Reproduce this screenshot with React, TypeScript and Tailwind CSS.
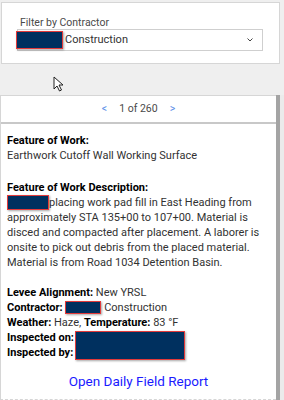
import React from 'react'

const font = { fontFamily: 'Roboto, "Open Sans", sans-serif' }

function Redact({ className = '' }: { className?: string }) {
  return (
    <span
      className={`inline-block align-middle bg-[#00305f] border border-[#e23a3a] shadow-[1px_1px_2px_rgba(0,0,0,0.35)] ${className}`}
    />
  )
}

function Cursor() {
  return (
    <svg className="absolute left-[53px] top-[76px]" width="12" height="16" viewBox="0 0 12 16">
      <path d="M1 1 L1 13 L4 10 L6.5 15 L8.5 14 L6 9 L10 9 Z" fill="#fff" stroke="#222" strokeWidth="1" strokeLinejoin="round" />
    </svg>
  )
}

export default function App() {
  return (
    <div className="relative w-[284px] h-[400px] bg-[#efefef] overflow-hidden text-[#323232]" style={font}>
      {/* filter panel */}
      <div className="ml-[1px] mt-[2px] w-[279px] h-[62px] bg-white border border-[#d6d6d6] pl-[15px] pt-[13px]">
        <div className="text-[10.5px] leading-[13px] text-[#4a4a4a] pl-[3px]">Filter by Contractor</div>
        <div className="w-[246px] h-[22px] border border-[#cfcfcf] flex items-center">
          <Redact className="w-[47px] h-[18px] -ml-[2px]" />
          <span className="ml-[2px] text-[11px] leading-[16px] text-[#323232]">Construction</span>
          <svg className="ml-auto mr-[8px]" width="8" height="6" viewBox="0 0 8 6">
            <path d="M1.5 1.5 L4 4 L6.5 1.5" fill="none" stroke="#444" strokeWidth="1" />
          </svg>
        </div>
      </div>

      <Cursor />

      {/* popup panel */}
      <div className="absolute left-0 top-[95px] w-[284px] h-[305px] flex">
        <div className="w-[276px] h-full bg-white border-l border-t border-b border-[#d6d6d6] [border-bottom-style:dashed] flex flex-col">
          <div className="h-[28px] shrink-0 flex items-center justify-center gap-[9px] text-[10.5px] leading-[14px] border-b-2 border-[#c8c8c8]">
            <span className="text-[#5a8fe8]">&lt;</span>
            <span className="text-[#4a4a4a] mx-[3px]">1 of 260</span>
            <span className="text-[#5a8fe8]">&gt;</span>
          </div>
          <div className="px-[6px] pt-[9px] text-[11px] leading-[15px]">
            <div className="font-bold text-black">Feature of Work:</div>
            <div>Earthwork Cutoff Wall Working Surface</div>
            <div className="h-[17px]" />
            <div className="font-bold text-black">Feature of Work Description:</div>
            <div className="whitespace-nowrap">
              <Redact className="w-[42px] h-[15px] -mt-[2px]" />
              placing work pad fill in East Heading from
              <br />
              approximately STA 135+00 to 107+00. Material is
              <br />
              disced and compacted after placement. A laborer is
              <br />
              onsite to pick out debris from the placed material.
              <br />
              Material is from Road 1034 Detention Basin.
            </div>
            <div className="h-[15px]" />
            <div><b className="text-black">Levee Alignment:</b> New YRSL</div>
            <div>
              <b className="text-black">Contractor:</b> <Redact className="w-[36px] h-[13px] -mt-[2px]" /> Construction
            </div>
            <div>
              <b className="text-black">Weather:</b> Haze, <b className="text-black">Temperature:</b> 83 °F
            </div>
            <div className="flex">
              <div className="font-bold text-black">
                <div>Inspected on:</div>
                <div>Inspected by:</div>
              </div>
              <Redact className="ml-[1px] mt-[1px] w-[110px] h-[29px]" />
            </div>
            <div className="mt-[14px] text-center text-[13.5px] text-[#1a1aff]">Open Daily Field Report</div>
          </div>
        </div>
        <div className="w-[4px] h-full bg-[#a4a4a4]" />
        <div className="w-[4px] h-full bg-[#ebebeb]" />
      </div>
    </div>
  )
}
